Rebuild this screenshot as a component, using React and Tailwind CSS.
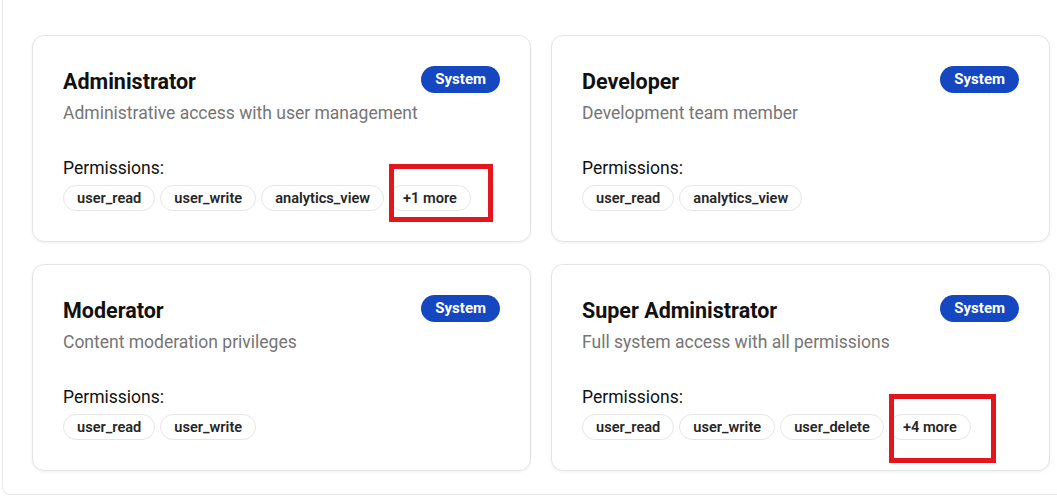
import React from 'react';

const roles = [
  {
    name: 'Administrator',
    description: 'Administrative access with user management',
    permissions: ['user_read', 'user_write', 'analytics_view', 'settings_view'],
  },
  {
    name: 'Developer',
    description: 'Development team member',
    permissions: ['user_read', 'analytics_view'],
  },
  {
    name: 'Moderator',
    description: 'Content moderation privileges',
    permissions: ['user_read', 'user_write'],
  },
  {
    name: 'Super Administrator',
    description: 'Full system access with all permissions',
    permissions: ['user_read', 'user_write', 'user_delete', 'analytics_view', 'settings_view', 'settings_write', 'roles_manage'],
  },
];

const Chip = ({ children }) => (
  <span className="inline-flex items-center h-[26px] px-[13px] rounded-full border border-[#e6e6e6] bg-white text-[14.6px] font-semibold text-[#262626] leading-none">
    {children}
  </span>
);

const RoleCard = ({ role }) => {
  const shown = role.permissions.slice(0, 3);
  const extra = role.permissions.length - shown.length;

  return (
    <div className="bg-white border border-[#e4e4e4] rounded-xl shadow-[0_1px_3px_rgba(0,0,0,0.06)] p-[30px]">
      <div className="flex items-start justify-between">
        <div>
          <h3 className="text-[21.5px] leading-[32px] font-bold text-[#111]">{role.name}</h3>
          <p className="mt-[3px] text-[17.5px] leading-[25px] text-[#757575]">{role.description}</p>
        </div>
        <span className="inline-flex items-center h-[27px] px-[14px] rounded-full bg-[#1547c1] text-white text-[15px] font-bold leading-none">
          System
        </span>
      </div>

      <div className="mt-[30px]">
        <div className="text-[17.5px] leading-[24px] text-[#111]">Permissions:</div>
        <div className="mt-[5px] flex flex-wrap gap-[5px]">
          {shown.map((p) => (
            <Chip key={p}>{p}</Chip>
          ))}
          {extra > 0 && <Chip>+{extra} more</Chip>}
        </div>
      </div>
    </div>
  );
};

export default function App() {
  return (
    <div className="relative h-[497px] overflow-hidden bg-white font-['Roboto',sans-serif]">
      <div className="ml-[2px] -mt-[30px] w-[1090px] border border-[#e6e8eb] rounded-lg pl-[29px] pt-[11px] pb-[23px]">
        <p className="pl-[31px] text-[15px] leading-[20px] text-[#8a8a8a]">All roles in this category</p>
        <div className="mt-[33px] grid grid-cols-[499px_499px] gap-x-[20px] gap-y-[22px]">
          {roles.map((r) => (
            <RoleCard key={r.name} role={r} />
          ))}
        </div>
      </div>

      {/* annotation boxes */}
      <div className="absolute left-[389px] top-[164px] w-[104px] h-[58px] border-[5px] border-[#e3161d]" />
      <div className="absolute left-[889px] top-[394px] w-[107px] h-[69px] border-[5px] border-[#e3161d]" />
    </div>
  );
}
